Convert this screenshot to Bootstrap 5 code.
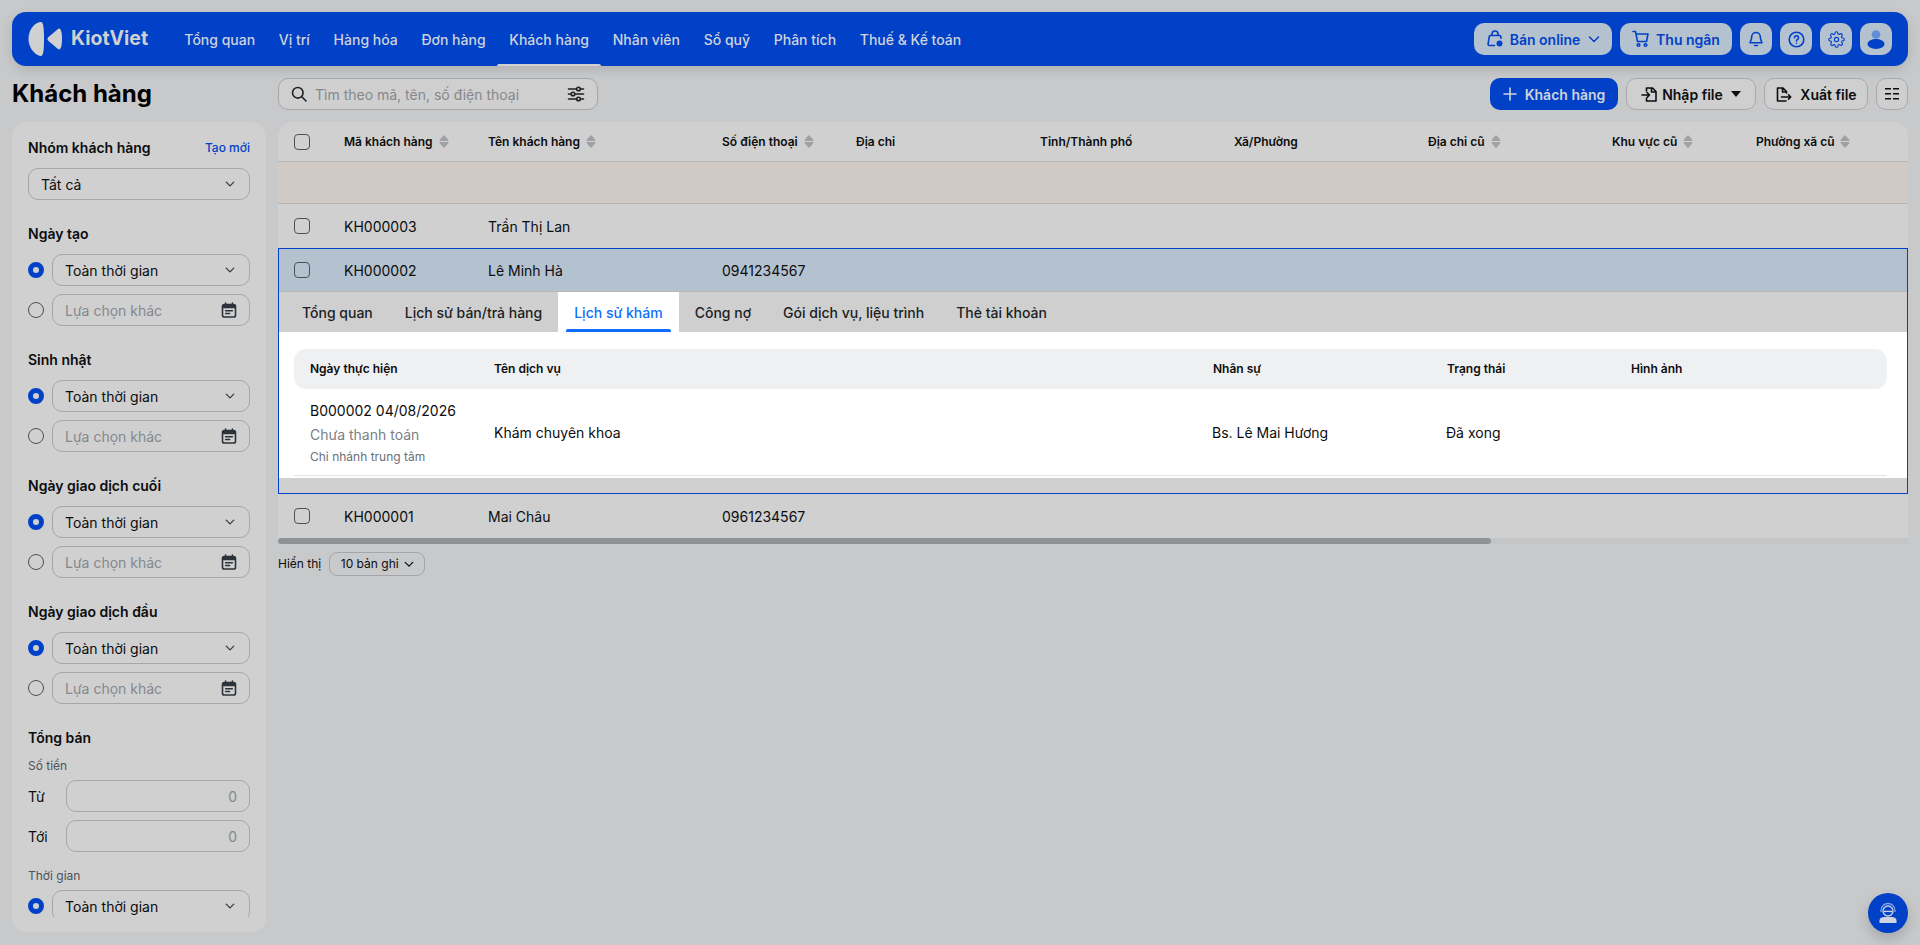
<!DOCTYPE html>
<html lang="vi">
<head>
  <meta charset="UTF-8">
  <meta name="viewport" content="width=device-width, initial-scale=1">
  <title>KiotViet - Khách hàng</title>

  <link href="https://cdn.jsdelivr.net/npm/bootstrap@5.3.0/dist/css/bootstrap.min.css" rel="stylesheet">
  <style>
    html, body { height: 100%; }
    body { background: #c8c9cb; font-family: Inter, "Liberation Sans", sans-serif; font-size: 14px; color: #0c0d0e; overflow: hidden; padding: 12px; }
    svg { display: block; flex: none; }
    .ic { fill: none; stroke: currentColor; stroke-width: 1.6; stroke-linecap: round; stroke-linejoin: round; }

    /* top bar */
    .kv-top { height: 54px; background: #0041c8; border-radius: 14px; padding: 0 16px; box-shadow: 0 4px 12px rgba(0,0,0,.12); }
    .kv-brand { width: 144.5px; color: #d0d0d0; }
    .kv-brand span { font-size: 19.5px; font-weight: 700; margin-left: 9px; }
    .kv-menu a { display: flex; align-items: center; height: 54px; padding: 0 11.85px; color: #cfd3dc; font-weight: 500; text-decoration: none; position: relative; white-space: nowrap; }
    .kv-menu a.on::after { content: ""; position: absolute; left: 0; right: 0; bottom: 0; height: 2px; background: #d0d0d0; border-radius: 2px 2px 0 0; }
    .kv-pill { height: 32px; background: #b4c1cf; color: #0041c8; border: 0; border-radius: 10px; font-weight: 600; font-size: 14px; display: flex; align-items: center; justify-content: center; padding: 0; }
    .kv-sq { width: 32px; }
    .kv-gap6 { margin-left: 6px; }

    /* left column */
    .kv-left { width: 254px; flex: none; }
    .kv-title { font-size: 24px; font-weight: 700; line-height: 32px; margin: 0 0 12px; color: #000; }
    .kv-side { height: 810px; background: #d0d0d0; border-radius: 14px; padding: 16px 16px 15px; }
    .kv-scroll { height: 779px; overflow: hidden; }
    .kv-lab { font-weight: 600; line-height: 20px; color: #0c0d0e; margin-bottom: 10px; }
    .kv-group { margin-bottom: 24px; }
    .kv-link { font-size: 12px; font-weight: 500; color: #0041c8; text-decoration: none; }
    .kv-hint { font-size: 12px; line-height: 16px; color: #4c525a; margin-bottom: 6px; }
    .kv-side .form-select, .kv-side .form-control { height: 32px; background-color: transparent; border: 1px solid #a5a6aa; border-radius: 10px; font-size: 14px; padding: 0 28px 0 12px; color: #0c0d0e; box-shadow: none; }
    .kv-side .form-select { background-position: right 14px center; background-size: 10px; }
    .kv-side .form-control::placeholder, .kv-search input::placeholder { color: #85888d; opacity: 1; }
    .kv-side .kv-num { text-align: right; padding: 0 12px; }
    .kv-side .kv-num::placeholder { color: #85888d; }
    .form-check-input { width: 16px; height: 16px; margin: 0; flex: none; background-color: transparent; border: 1px solid #4a5058; }
    .form-check-input[type=checkbox] { border-radius: 4px; }
    .form-check-input[type=radio]:checked { background: #d0d0d0; border: 5px solid #0041c8; }
    .kv-date { position: relative; flex: 1; }
    .kv-date svg { position: absolute; right: 13px; top: 8px; color: #2d333a; }
    .kv-tag { width: 38px; flex: none; }

    /* toolbar */
    .kv-main { width: 1630px; margin-left: 12px; flex: none; }
    .kv-search { width: 320px; height: 32px; border: 1px solid #a5a6aa; border-radius: 10px; background: #cfcfcf; padding: 0 12px; color: #1e2226; }
    .kv-search input { border: 0; background: transparent; outline: 0; flex: 1; min-width: 0; font-size: 14px; margin: 0 8px; padding: 0; }
    .kv-act { height: 32px; border-radius: 10px; font-weight: 600; font-size: 14px; display: flex; align-items: center; justify-content: center; padding: 0; }
    .kv-act.blue { width: 128px; background: #0041c8; color: #cfd3dc; border: 0; }
    .kv-act.line { background: #cfcfcf; border: 1px solid #a8a9ad; color: #0c0d0e; }
    .kv-caret { width: 0; height: 0; border: 5px solid transparent; border-top: 6px solid #0c0d0e; border-bottom: 0; }

    /* customer table */
    .kv-table { margin-top: 12px; background: #d0d0d0; border-radius: 14px 14px 0 0; overflow: hidden; }
    .kv-row { display: grid; grid-template-columns: 66px 144px 234px 134px 184px 194px 194px 184px 144px 1fr; align-items: center; border-bottom: 1px solid #b5b6b8; }
    .kv-row > div { white-space: nowrap; display: flex; align-items: center; gap: 6px; }
    .kv-row > div:first-child { padding-left: 16px; }
    .kv-head { height: 40px; font-size: 12px; font-weight: 600; }
    .kv-warn { height: 42px; background: #d1c9c3; }
    .kv-cust { height: 44px; }
    .kv-open { border: 1px solid #0041c8; height: 246px; }
    .kv-open .kv-row { background: #b4c1ce; height: 43px; grid-template-columns: 65px 144px 234px 134px 1fr; }
    .kv-open .kv-row > div:first-child { padding-left: 15px; }
    .kv-tabs { height: 40px; padding-left: 7px; background: #cfcfcf; }
    .kv-tabs a { display: flex; align-items: center; height: 40px; padding: 0 16px; color: #1b1e22; font-weight: 500; text-decoration: none; position: relative; }
    .kv-tabs a.on { background: #fff; color: #0d6efd; }
    .kv-tabs a.on::after { content: ""; position: absolute; left: 8px; right: 8px; bottom: 0; height: 3px; background: #0d6efd; border-radius: 2px 2px 0 0; }
    .kv-detail { background: #fff; height: 146px; padding: 17px 20px 0 15px; }
    .kv-sub { display: grid; grid-template-columns: 184px 719px 234px 184px 1fr; align-items: center; }
    .kv-sub > div { padding-left: 16px; }
    .kv-subhead { height: 40px; background: #eff0f2; border-radius: 12px; font-size: 12px; font-weight: 600; }
    .kv-subrow { height: 87px; border-bottom: 1px solid #e2e3e5; }
    .kv-subrow > div:first-child { margin-top: 2px; }
    .kv-subrow > div:nth-child(n+3) { padding-left: 15px; }
    .kv-code { line-height: 22px; }
    .kv-unpaid { color: #7b7f85; line-height: 22px; margin-top: 2px; }
    .kv-branch { color: #6c7076; font-size: 12px; line-height: 20px; margin-top: 1px; }
    .kv-foot { height: 6px; background: #c4c5c7; }
    .kv-thumb { width: 1213px; height: 6px; background: #909395; border-radius: 3px; }
    .kv-pager { font-size: 12px; margin-top: 8px; }
    .kv-size { height: 24px; width: 96px; border: 1px solid #a5a6aa; border-radius: 8px; font-size: 12px; justify-content: center; gap: 5px; }

    .kv-fab { position: fixed; right: 12px; bottom: 12px; width: 40px; height: 40px; border-radius: 50%; background: #0041c8; color: #d0d4de; box-shadow: 0 6px 14px rgba(0,0,0,.18); }
  </style>
</head>

<body>
  <svg width="0" height="0" class="position-absolute">
    <symbol id="chev" viewBox="0 0 12 12"><path d="M1.5 4l4.5 4.5L10.5 4" fill="none" stroke="currentColor" stroke-width="1.5" stroke-linecap="round" stroke-linejoin="round"/></symbol>
    <symbol id="sort" viewBox="0 0 10 13"><path d="M4.2 .7a1 1 0 0 1 1.600 0L9.300 4.800c.5.6.1 1.200-.6 1.200H1.300c-.7 0-1.100-.6-.6-1.200zM1.300 7h7.400c.7 0 1.100.6.6 1.200L5.800 12.300a1 1 0 0 1-1.600 0L.7 8.200C.2 7.600.6 7 1.300 7z" fill="#a0a1a4"/></symbol>
    <symbol id="cal" viewBox="0 0 16 16">
      <rect x="1.5" y="2.6" width="13" height="12.4" rx="1.8" fill="none" stroke="currentColor" stroke-width="1.6"/>
      <path d="M1.5 6.3h13V4.4a1.8 1.8 0 0 0-1.8-1.8H3.3a1.8 1.8 0 0 0-1.8 1.8z" fill="currentColor"/>
      <path d="M4.6 1v2.4M11.4 1v2.4M4.6 8.8h6.8M4.6 11.6h4" fill="none" stroke="currentColor" stroke-width="1.5" stroke-linecap="round"/>
    </symbol>
  </svg>

  <!-- top bar -->
  <nav class="kv-top d-flex align-items-center">
    <a class="kv-brand d-flex align-items-center text-decoration-none" href="#">
      <svg width="34" height="34" viewBox="0 0 34 34"><path d="M12 0C4 2 .5 10 .5 17S5 32 12 34c3 .4 4-3 4-17S15-.5 12 0z" fill="currentColor"/><path d="M20.500 15L30 7c2-1.500 4 1 4 10s-2 11.500-4 10l-9.500-8c-1.400-1.200-1.400-2.800 0-4z" fill="currentColor"/></svg>
      <span>KiotViet</span>
    </a>
    <div class="kv-menu d-flex">
      <a href="#">Tổng quan</a>
      <a href="#">Vị trí</a>
      <a href="#">Hàng hóa</a>
      <a href="#">Đơn hàng</a>
      <a href="#" class="on">Khách hàng</a>
      <a href="#">Nhân viên</a>
      <a href="#">Sổ quỹ</a>
      <a href="#">Phân tích</a>
      <a href="#">Thuế &amp; Kế toán</a>
    </div>
    <div class="d-flex ms-auto gap-2">
      <button class="kv-pill" style="width:138px">
        <svg class="ic" width="18" height="18" viewBox="0 0 18 18" stroke-width="1.300"><path d="M6 5.500V4a3 3 0 0 1 6 0v1.500M8.500 15.500H3.500c-1 0-1.500-.7-1.400-1.600L3.300 6.300c.1-.5.500-.8 1-.8h9.400c.5 0 .9.300 1 .8l.3 2"/><circle cx="13.500" cy="13.500" r="3" fill="currentColor" stroke="none"/></svg>
        <span class="kv-gap6 me-2">Bán online</span>
        <svg width="12" height="12"><use href="#chev"/></svg>
      </button>
      <button class="kv-pill" style="width:112px">
        <svg class="ic" width="18" height="18" viewBox="0 0 18 18" stroke-width="1.400"><path d="M1 1.500h2.500l2 10h9l1.500-7.500H4"/><circle cx="6.500" cy="15" r="1.300"/><circle cx="13.500" cy="15" r="1.300"/></svg>
        <span class="kv-gap6">Thu ngân</span>
      </button>
      <button class="kv-pill kv-sq"><svg class="ic" width="16" height="16" viewBox="0 0 16 16"><path d="M8 1.500a4.300 4.300 0 0 0-4.300 4.300c0 3.700-1.700 5.200-1.700 6h12c0-.8-1.700-2.300-1.700-6A4.300 4.300 0 0 0 8 1.500zM6.500 14.500h3"/></svg></button>
      <button class="kv-pill kv-sq"><svg class="ic" width="17" height="17" viewBox="0 0 17 17"><circle cx="8.500" cy="8.500" r="7.300"/><path d="M6.500 6.600a2 2 0 1 1 3 1.800c-.7.400-1 .8-1 1.500M8.500 12.200v.1"/></svg></button>
      <button class="kv-pill kv-sq"><svg class="ic" width="17" height="17" viewBox="0 0 24 24" stroke-width="2"><circle cx="12" cy="12" r="3"/><path d="M19.400 15a1.650 1.650 0 0 0 .33 1.820l.06.06a2 2 0 1 1-2.830 2.830l-.06-.06a1.650 1.650 0 0 0-2.800 1.170V21a2 2 0 0 1-4 0v-.09A1.650 1.650 0 0 0 7.300 19.800l-.06.06a2 2 0 1 1-2.830-2.830l.06-.06a1.650 1.650 0 0 0-1.170-2.800H3a2 2 0 0 1 0-4h.09A1.650 1.650 0 0 0 4.200 7.300l-.06-.06a2 2 0 1 1 2.830-2.830l.06.06a1.650 1.650 0 0 0 2.800-1.170V3a2 2 0 0 1 4 0v.09a1.650 1.650 0 0 0 2.800 1.170l.06-.06a2 2 0 1 1 2.830 2.830l-.06.06a1.650 1.650 0 0 0 1.170 2.800H21a2 2 0 0 1 0 4h-.09a1.650 1.650 0 0 0-1.510 1.110z"/></svg></button>
      <button class="kv-pill kv-sq"><svg width="24" height="24" viewBox="0 0 24 24"><circle cx="12" cy="7.500" r="4.300" fill="#5e8fd6"/><ellipse cx="12" cy="17" rx="8.500" ry="5" fill="#0041c8"/></svg></button>
    </div>
  </nav>

  <div class="d-flex mt-2 pt-1">
    <!-- filters -->
    <aside class="kv-left">
      <h1 class="kv-title">Khách hàng</h1>
      <div class="kv-side">
        <div class="kv-scroll">
          <div class="kv-group">
            <div class="d-flex justify-content-between align-items-center kv-lab"><span>Nhóm khách hàng</span><a class="kv-link" href="#">Tạo mới</a></div>
            <select class="form-select"><option>Tất cả</option></select>
          </div>

          <div class="kv-group">
            <div class="kv-lab">Ngày tạo</div>
            <div class="d-flex align-items-center gap-2 mb-2"><input class="form-check-input" type="radio" name="r1" checked><select class="form-select"><option>Toàn thời gian</option></select></div>
            <div class="d-flex align-items-center gap-2"><input class="form-check-input" type="radio" name="r1"><div class="kv-date"><input class="form-control" placeholder="Lựa chọn khác"><svg width="16" height="16"><use href="#cal"/></svg></div></div>
          </div>

          <div class="kv-group">
            <div class="kv-lab">Sinh nhật</div>
            <div class="d-flex align-items-center gap-2 mb-2"><input class="form-check-input" type="radio" name="r2" checked><select class="form-select"><option>Toàn thời gian</option></select></div>
            <div class="d-flex align-items-center gap-2"><input class="form-check-input" type="radio" name="r2"><div class="kv-date"><input class="form-control" placeholder="Lựa chọn khác"><svg width="16" height="16"><use href="#cal"/></svg></div></div>
          </div>

          <div class="kv-group">
            <div class="kv-lab">Ngày giao dịch cuối</div>
            <div class="d-flex align-items-center gap-2 mb-2"><input class="form-check-input" type="radio" name="r3" checked><select class="form-select"><option>Toàn thời gian</option></select></div>
            <div class="d-flex align-items-center gap-2"><input class="form-check-input" type="radio" name="r3"><div class="kv-date"><input class="form-control" placeholder="Lựa chọn khác"><svg width="16" height="16"><use href="#cal"/></svg></div></div>
          </div>

          <div class="kv-group">
            <div class="kv-lab">Ngày giao dịch đầu</div>
            <div class="d-flex align-items-center gap-2 mb-2"><input class="form-check-input" type="radio" name="r4" checked><select class="form-select"><option>Toàn thời gian</option></select></div>
            <div class="d-flex align-items-center gap-2"><input class="form-check-input" type="radio" name="r4"><div class="kv-date"><input class="form-control" placeholder="Lựa chọn khác"><svg width="16" height="16"><use href="#cal"/></svg></div></div>
          </div>

          <div>
            <div class="kv-lab">Tổng bán</div>
            <div class="kv-hint">Số tiền</div>
            <div class="d-flex align-items-center mb-2"><span class="kv-tag">Từ</span><input class="form-control kv-num" placeholder="0"></div>
            <div class="d-flex align-items-center mb-3"><span class="kv-tag">Tới</span><input class="form-control kv-num" placeholder="0"></div>
            <div class="kv-hint">Thời gian</div>
            <div class="d-flex align-items-center gap-2"><input class="form-check-input" type="radio" name="r5" checked><select class="form-select"><option>Toàn thời gian</option></select></div>
          </div>
        </div>
      </div>
    </aside>

    <main class="kv-main">
      <!-- toolbar -->
      <div class="d-flex align-items-center justify-content-between">
        <div class="kv-search d-flex align-items-center">
          <svg class="ic" width="16" height="16" viewBox="0 0 16 16"><circle cx="6.800" cy="6.800" r="5.300"/><path d="M10.800 10.800L15 15"/></svg>
          <input type="text" placeholder="Tìm theo mã, tên, số điện thoại">
          <svg class="ic" width="18" height="18" viewBox="0 0 18 18" stroke-width="1.300"><path d="M1.500 4h8M13.500 4h3M1.500 9h2.500M8 9h8.500M1.500 14h8M13.500 14h3"/><circle cx="11.500" cy="4" r="1.800"/><circle cx="6" cy="9" r="1.800"/><circle cx="11.500" cy="14" r="1.800"/></svg>
        </div>
        <div class="d-flex gap-2">
          <button class="kv-act blue">
            <svg class="ic" width="14" height="14" viewBox="0 0 14 14" stroke-width="2.200"><path d="M7 1v12M1 7h12"/></svg>
            <span class="ms-2">Khách hàng</span>
          </button>
          <button class="kv-act line" style="width:130px">
            <svg class="ic" width="17" height="17" viewBox="0 0 17 17" stroke-width="1.400"><path d="M5.500 5V2h6l3.500 3.500V15H5.500v-2.500M10.500 2.500V6h4M1 9h7.500M6 6.500L8.500 9 6 11.500"/></svg>
            <span class="ms-1 me-2">Nhập file</span>
            <span class="kv-caret"></span>
          </button>
          <button class="kv-act line" style="width:104px">
            <svg class="ic" width="17" height="17" viewBox="0 0 17 17" stroke-width="1.500"><path d="M11 15H2.500V2h5.500l3.500 3.500V7M7.500 2.500V6h3.500M6.500 11h9M13.500 8.800l2.200 2.200-2.200 2.200"/></svg>
            <span class="ms-2">Xuất file</span>
          </button>
          <button class="kv-act line" style="width:32px">
            <svg width="14" height="12" viewBox="0 0 14 12" fill="#0c0d0e"><path d="M0 0h6v1.600H0zM8 0h6v1.600H8zM0 5h6v1.600H0zM8 5h6v1.600H8zM0 10h6v1.600H0zM8 10h6v1.600H8z"/></svg>
          </button>
        </div>
      </div>

      <!-- table -->
      <div class="kv-table">
        <div class="kv-row kv-head">
          <div><input class="form-check-input" type="checkbox"></div>
          <div>Mã khách hàng <svg width="10" height="13"><use href="#sort"/></svg></div>
          <div>Tên khách hàng <svg width="10" height="13"><use href="#sort"/></svg></div>
          <div>Số điện thoại <svg width="10" height="13"><use href="#sort"/></svg></div>
          <div>Địa chỉ</div>
          <div>Tỉnh/Thành phố</div>
          <div>Xã/Phường</div>
          <div>Địa chỉ cũ <svg width="10" height="13"><use href="#sort"/></svg></div>
          <div>Khu vực cũ <svg width="10" height="13"><use href="#sort"/></svg></div>
          <div>Phường xã cũ <svg width="10" height="13"><use href="#sort"/></svg></div>
        </div>
        <div class="kv-row kv-warn"></div>
        <div class="kv-row kv-cust border-0">
          <div><input class="form-check-input" type="checkbox"></div>
          <div>KH000003</div>
          <div>Trần Thị Lan</div>
        </div>

        <div class="kv-open">
          <div class="kv-row">
            <div><input class="form-check-input" type="checkbox"></div>
            <div>KH000002</div>
            <div>Lê Minh Hà</div>
            <div>0941234567</div>
          </div>
          <div class="kv-tabs d-flex">
            <a href="#">Tổng quan</a>
            <a href="#">Lịch sử bán/trả hàng</a>
            <a href="#" class="on">Lịch sử khám</a>
            <a href="#">Công nợ</a>
            <a href="#">Gói dịch vụ, liệu trình</a>
            <a href="#">Thẻ tài khoản</a>
          </div>
          <div class="kv-detail">
            <div class="kv-sub kv-subhead">
              <div>Ngày thực hiện</div>
              <div>Tên dịch vụ</div>
              <div>Nhân sự</div>
              <div>Trạng thái</div>
              <div>Hình ảnh</div>
            </div>
            <div class="kv-sub kv-subrow">
              <div>
                <div class="kv-code">B000002 04/08/2026</div>
                <div class="kv-unpaid">Chưa thanh toán</div>
                <div class="kv-branch">Chi nhánh trung tâm</div>
              </div>
              <div>Khám chuyên khoa</div>
              <div>Bs. Lê Mai Hương</div>
              <div>Đã xong</div>
              <div></div>
            </div>
          </div>
        </div>

        <div class="kv-row kv-cust border-0">
          <div><input class="form-check-input" type="checkbox"></div>
          <div>KH000001</div>
          <div>Mai Châu</div>
          <div>0961234567</div>
        </div>
        <div class="kv-foot"><div class="kv-thumb"></div></div>
      </div>

      <div class="kv-pager d-flex align-items-center">
        <span class="me-2">Hiển thị</span>
        <div class="kv-size d-flex align-items-center">10 bản ghi <svg width="10" height="10"><use href="#chev"/></svg></div>
      </div>
    </main>
  </div>

  <!-- support button -->
  <div class="kv-fab d-flex align-items-center justify-content-center">
    <svg width="22" height="22" viewBox="0 0 22 22"><path d="M4 10V8.500a7 7 0 0 1 14 0V10" fill="none" stroke="#7fa3e6" stroke-width="1.300"/><circle cx="11" cy="9" r="5" fill="none" stroke="currentColor" stroke-width="1.300"/><path d="M7 9.500c2.500-.2 5-.2 8 0" fill="none" stroke="currentColor" stroke-width="1.300"/><path d="M2.500 21v-2.500C2.500 16 5 15 8 15h6c3 0 5.500 1 5.500 3.500V21z" fill="currentColor"/></svg>
  </div>

  <script src="https://cdn.jsdelivr.net/npm/bootstrap@5.3.0/dist/js/bootstrap.bundle.min.js"></script>
</body>
</html>
